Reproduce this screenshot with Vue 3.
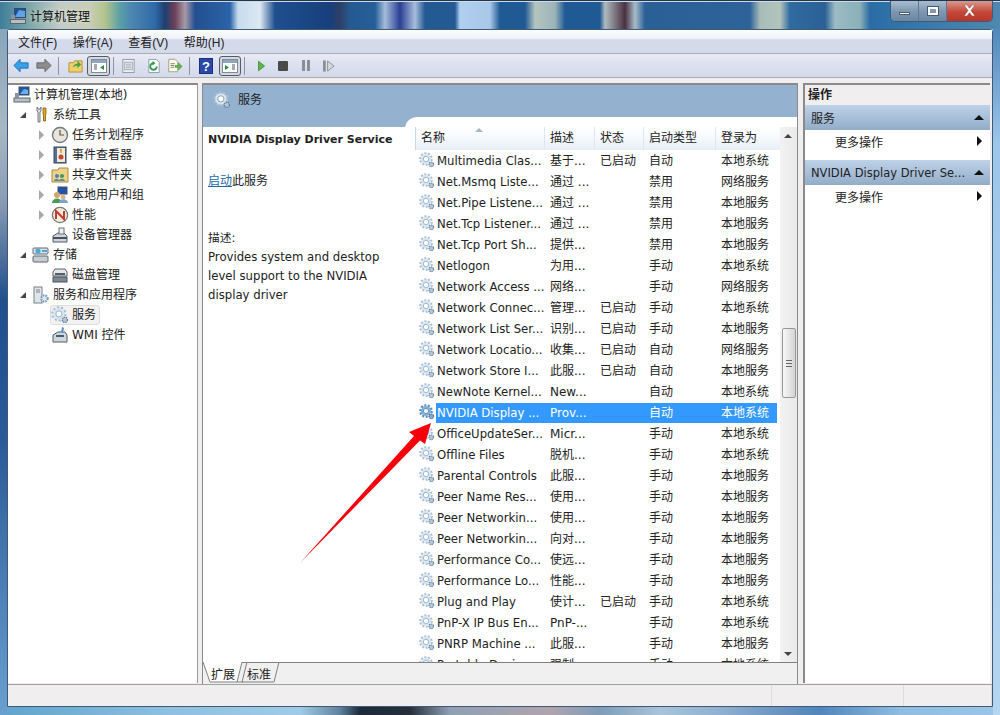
<template>
  <div class="desktop">
    <svg class="defs" width="0" height="0">
      <defs>
        <symbol id="gear" viewBox="0 0 16 16">
          <circle cx="7" cy="7" r="5.700" fill="none" stroke="#a6c0d6" stroke-width="2.200" stroke-dasharray="2 1.500" />
          <circle cx="7" cy="7" r="4" fill="none" stroke="#d8e4ee" stroke-width="2.200" />
          <circle cx="7" cy="7" r="2.700" fill="#fff" stroke="#8aa6be" stroke-width=".8" />
          <circle cx="12.300" cy="12.300" r="2.300" fill="#b8c8d6" stroke="#5f7f9c" stroke-width="1.200" stroke-dasharray="1.200 .7" />
        </symbol>
        <symbol id="gear-on" viewBox="0 0 16 16">
          <circle cx="7" cy="7" r="5.700" fill="none" stroke="#4f88bd" stroke-width="2.200" stroke-dasharray="2 1.500" />
          <circle cx="7" cy="7" r="4" fill="none" stroke="#7fb0da" stroke-width="2.200" />
          <circle cx="7" cy="7" r="2.700" fill="#eaf3fb" stroke="#3f76aa" stroke-width=".8" />
          <circle cx="12.300" cy="12.300" r="2.300" fill="#86acd0" stroke="#37699a" stroke-width="1.200" stroke-dasharray="1.200 .7" />
        </symbol>
      </defs>
    </svg>

    <div class="titlebar">
      <svg class="title-icon" width="18" height="18" viewBox="0 0 18 18">
        <rect x="5.500" y="1.500" width="11" height="9" fill="#1d4fa8" stroke="#3c4a5c" />
        <path d="M6 10l4-7 6 1v6z" fill="#5fa3e6" />
        <rect x="1.500" y="12.500" width="15" height="4" fill="#b8bec4" stroke="#5b6670" />
        <rect x="2" y="8" width="4" height="4" fill="#8a949e" />
      </svg>
      <span class="title-text">计算机管理</span>
      <div class="caption-buttons">
        <div class="cap cap-min"><i></i></div>
        <div class="cap cap-max"><i></i></div>
        <div class="cap cap-close">
          <svg width="13" height="11" viewBox="0 0 13 11"><path d="M1 0h3l2.500 3.300L9 0h3L8 5.500l4 5.500H9L6.500 7.700 4 11H1l4-5.500z" fill="#fff" stroke="#7a3a34" stroke-width=".5" /></svg>
        </div>
      </div>
    </div>

    <div class="frame">
      <div class="menubar">
        <span v-for="m in menus" :key="m">{{ m }}</span>
      </div>

      <div class="toolbar">
        <svg class="tb" width="16" height="15" viewBox="0 0 18 16"><path d="M1 8l7-7v4h9v6H8v4z" fill="#3aa0e8" stroke="#1f6fb0" /></svg>
        <svg class="tb t-fwd" width="16" height="15" viewBox="0 0 18 16"><path d="M17 8l-7-7v4H1v6h9v4z" fill="#8d8d8d" stroke="#666" /></svg>
        <b class="sep s-a"></b>
        <svg class="tb t-up" width="15" height="15" viewBox="0 0 16 16"><path d="M1 5h5l1-2h8v12H1z" fill="#f0cf6c" stroke="#b8922e" /><path d="M5 10c1-3 3-4 5-4V3l4 4-4 4V8c-2 0-3 1-5 2z" fill="#3fa23f" /></svg>
        <span class="toggle t-tree">
          <svg width="16" height="14" viewBox="0 0 16 14"><rect x=".5" y=".5" width="15" height="13" fill="#fff" stroke="#7f8a96" /><rect x="1" y="1" width="14" height="3" fill="#8ea6c0" /><path d="M3 6h3M3 8h3M3 10h3" stroke="#556" /><path d="M13 6v5l-4-2.500z" fill="#2d8a45" /></svg>
        </span>
        <b class="sep s-b"></b>
        <svg class="tb t-doc" width="15" height="16" viewBox="0 0 16 16"><rect x="2" y="1" width="12" height="14" fill="#eef1f4" stroke="#8d98a4" /><rect x="4" y="4" width="8" height="8" fill="#fff" stroke="#9aa5b0" /><path d="M5 6h6M5 8h6M5 10h6" stroke="#8d98a4" /></svg>
        <svg class="tb t-refresh" width="15" height="16" viewBox="0 0 16 16"><path d="M3 1h8l3 3v11H3z" fill="#fff" stroke="#8d98a4" /><path d="M8 5a3.500 3.500 0 1 0 3.500 3.500" fill="none" stroke="#2f9a4a" stroke-width="2" /><path d="M7 2.500l3 2.500-3 2.500z" fill="#2f9a4a" /></svg>
        <svg class="tb t-export" width="16" height="15" viewBox="0 0 18 16"><path d="M2 1h7l3 3v11H2z" fill="#fffde8" stroke="#9a9a80" /><path d="M4 6h5M4 8h4M4 10h4" stroke="#777" /><path d="M9 8h4V5l4 4-4 4v-3H9z" fill="#62b84a" stroke="#3c8a2c" stroke-width=".6" /></svg>
        <b class="sep s-c"></b>
        <svg class="tb t-help" width="14" height="16" viewBox="0 0 14 16"><rect x=".5" y=".5" width="13" height="15" fill="#2a48a8" stroke="#1c2f78" /><text x="7" y="13" text-anchor="middle" font-size="13" font-weight="700" font-family="Liberation Sans, sans-serif" fill="#fff">?</text></svg>
        <span class="toggle t-act">
          <svg width="16" height="14" viewBox="0 0 16 14"><rect x=".5" y=".5" width="15" height="13" fill="#fff" stroke="#7f8a96" /><rect x="1" y="1" width="14" height="3" fill="#8ea6c0" /><path d="M10 6h3M10 8h3M10 10h3" stroke="#556" /><path d="M3 6v5l4-2.500z" fill="#2d8a45" /></svg>
        </span>
        <b class="sep s-b"></b>
        <svg class="tb t-play" width="7" height="12" viewBox="0 0 8 12"><path d="M.5.5l7 5.500-7 5.500z" fill="#5cb84a" stroke="#3f8f32" /></svg>
        <span class="stop"></span>
        <span class="pause"><i></i><i></i></span>
        <svg class="tb t-step" width="12" height="12" viewBox="0 0 13 12"><rect x="0" y="0" width="3" height="12" fill="#8a8f95" /><path d="M5 .5l7 5.500-7 5.500z" fill="#d5d8dc" stroke="#8a8f95" /></svg>
      </div>

      <div class="panes">
        <aside class="tree">
          <div v-for="n in tree" :key="n.label" class="node" :class="'lvl' + n.level">
            <span class="twisty" :class="n.twisty"></span>
            <span class="node-icon"><svg width="18" height="18" viewBox="0 0 18 18" v-html="icons[n.icon]"></svg></span>
            <span class="node-label" :class="{ picked: n.picked }">{{ n.label }}</span>
          </div>
        </aside>

        <main class="center">
          <div class="center-head">
            <svg class="head-gear" width="18" height="18"><use href="#gear" /></svg>
            <span>服务</span>
          </div>
          <div class="center-body">
            <div class="detail">
              <h3>NVIDIA Display Driver Service</h3>
              <p class="start"><a>启动</a>此服务</p>
              <p class="desc">描述:<br />Provides system and desktop<br />level support to the NVIDIA<br />display driver</p>
            </div>
            <div class="list-wrap">
              <div class="list">
                <div class="list-head">
                  <span class="col c1">名称<em class="sort"></em></span>
                  <span class="col c2">描述</span>
                  <span class="col c3">状态</span>
                  <span class="col c4">启动类型</span>
                  <span class="col c5">登录为</span>
                </div>
                <div v-for="r in services" :key="r[0] + r[1]" class="row" :class="{ selected: r[0].startsWith('NVIDIA') }">
                  <svg class="row-gear" width="16" height="16"><use :href="r[0].startsWith('NVIDIA') ? '#gear-on' : '#gear'" /></svg>
                  <div class="cells">
                    <span class="cell c1">{{ r[0] }}</span>
                    <span class="cell c2">{{ r[1] }}</span>
                    <span class="cell c3">{{ r[2] }}</span>
                    <span class="cell c4">{{ r[3] }}</span>
                    <span class="cell c5">{{ r[4] }}</span>
                  </div>
                </div>
              </div>
              <div class="scrollbar">
                <span class="arrow-up"></span>
                <span class="thumb"><i></i></span>
                <span class="arrow-down"></span>
              </div>
            </div>
          </div>
          <div class="tabs">
            <svg class="tab-lines" width="90" height="22" viewBox="0 0 90 22">
              <path d="M0 0L7 20H34L39 0z" fill="#fff" />
              <path d="M0 0L7 20H34L39 0M34 20H40M39 20L44 0H76L71 20H39" fill="none" stroke="#808080" />
            </svg>
            <span class="tab">扩展</span>
            <span class="tab">标准</span>
          </div>
        </main>

        <aside class="actions">
          <div class="actions-title">操作</div>
          <div class="group-head"><span>服务</span><i class="tri-up"></i></div>
          <div class="group-item"><span>更多操作</span><i class="tri-right"></i></div>
          <div class="group-head"><span class="latin">NVIDIA Display Driver Se...</span><i class="tri-up"></i></div>
          <div class="group-item"><span>更多操作</span><i class="tri-right"></i></div>
        </aside>
      </div>

      <div class="statusbar">
        <span class="s1"></span>
        <span class="s2"></span>
        <span class="s3"></span>
      </div>
    </div>

    <svg class="red-arrow" width="1000" height="715" viewBox="0 0 1000 715">
      <path d="M300 563L414 436 409 432 431 423 425 444 420 440.500z" fill="#f5000a" />
    </svg>
  </div>
</template>

<script setup>
const menus = ['文件(F)', '操作(A)', '查看(V)', '帮助(H)']

const icons = {
  computer:
    '<rect x="6" y="1" width="10" height="8" fill="#1f55ac" stroke="#44505e"/><path d="M7 8l4-5 4 1v4z" fill="#6cb0ea"/><rect x="1" y="12" width="16" height="4" fill="#b9bfc5" stroke="#5b6670"/><rect x="2" y="7" width="4" height="5" fill="#8a949e"/>',
  tools:
    '<path d="M5 1v4l1 1v10h2V6l1-1V1L8 3H6z" fill="#d8dde2" stroke="#59636d" stroke-width=".8"/><path d="M11 2h3v6l-.5 1v6h-2V9L11 8z" fill="#e4a91c" stroke="#7c5d12" stroke-width=".8"/>',
  clock:
    '<circle cx="9" cy="9" r="7.500" fill="#e9e6d8" stroke="#707a84" stroke-width="1.400"/><path d="M9 4v5h4" fill="none" stroke="#555" stroke-width="1.200"/>',
  event:
    '<rect x="3" y="1" width="12" height="16" fill="#54709c" stroke="#38465c"/><rect x="6" y="2" width="8" height="14" fill="#f2ead2"/><circle cx="10" cy="11" r="2.500" fill="#c9423a"/><path d="M9 3h2l-.5 4h-1z" fill="#d09a1c"/>',
  share:
    '<path d="M1 4h6l1-2h9v14H1z" fill="#ecd388" stroke="#a88b3c"/><circle cx="6" cy="10" r="2" fill="#4f7fc0"/><circle cx="11" cy="10" r="2" fill="#3e9a52"/><path d="M3 15c0-3 5-3 5 0zM8 15c0-3 6-3 6 0z" fill="#5e8aa8"/>',
  users:
    '<rect x="7" y="1" width="9" height="7" fill="#1f55ac" stroke="#44505e"/><circle cx="6" cy="9" r="3" fill="#d4a46c"/><path d="M1 17c0-6 10-6 10 0z" fill="#4d9a54"/><circle cx="12" cy="11" r="2.500" fill="#d9b48a"/><path d="M8 17c0-5 9-5 9 0z" fill="#7ea6cc"/>',
  perf:
    '<circle cx="9" cy="9" r="7.600" fill="#f2ecdc" stroke="#7a7a72" stroke-width="1.300"/><path d="M5 13V5l8 8V5" fill="none" stroke="#c23a30" stroke-width="2"/>',
  device:
    '<path d="M2 10l5-3h6l3 3v6H2z" fill="#cfd4d9" stroke="#525c66"/><rect x="8" y="2" width="5" height="6" fill="#eef0f2" stroke="#6b747d"/><rect x="2" y="11" width="14" height="2" fill="#4a5460"/>',
  storage:
    '<rect x="1" y="2" width="15" height="6" rx="1" fill="#dfe3e7" stroke="#5c6670"/><rect x="1" y="10" width="15" height="6" rx="1" fill="#c6ccd2" stroke="#5c6670"/><circle cx="6" cy="5" r="2.600" fill="#4ea7d8"/><rect x="10" y="4" width="5" height="2" fill="#4ea7d8"/>',
  disk:
    '<path d="M2 6l2-3h10l2 3v4H2z" fill="#e5e7e9" stroke="#59636d"/><rect x="2" y="11" width="14" height="5" fill="#7f8890" stroke="#4f5962"/><rect x="4" y="7" width="10" height="2" fill="#555f69"/>',
  apps:
    '<rect x="2" y="1" width="8" height="16" fill="#e1e5ea" stroke="#76808a"/><path d="M4 4h4M4 6h4" stroke="#76808a"/><circle cx="12.500" cy="12.500" r="3.200" fill="#dfe8f0" stroke="#6f98ba" stroke-width="2" stroke-dasharray="1.600 1"/>',
  service: '<use href="#gear" x="0" y="0" width="18" height="18"/>',
  wmi:
    '<path d="M2 9l5-3h7l2 3v7H2z" fill="#cfd6dc" stroke="#525c66"/><path d="M5 9h8v2H5z" fill="#3f5f7f"/><path d="M11 1l2 1-1 5-2-1z" fill="#5b96c9"/>',
}

const tree = [
  { label: '计算机管理(本地)', level: 0, icon: 'computer' },
  { label: '系统工具', level: 1, icon: 'tools', twisty: 'open' },
  { label: '任务计划程序', level: 2, icon: 'clock', twisty: 'closed' },
  { label: '事件查看器', level: 2, icon: 'event', twisty: 'closed' },
  { label: '共享文件夹', level: 2, icon: 'share', twisty: 'closed' },
  { label: '本地用户和组', level: 2, icon: 'users', twisty: 'closed' },
  { label: '性能', level: 2, icon: 'perf', twisty: 'closed' },
  { label: '设备管理器', level: 2, icon: 'device' },
  { label: '存储', level: 1, icon: 'storage', twisty: 'open' },
  { label: '磁盘管理', level: 2, icon: 'disk' },
  { label: '服务和应用程序', level: 1, icon: 'apps', twisty: 'open' },
  { label: '服务', level: 2, icon: 'service', picked: true },
  { label: 'WMI 控件', level: 2, icon: 'wmi' },
]

const services = [
  ['Multimedia Clas...', '基于...', '已启动', '自动', '本地系统'],
  ['Net.Msmq Liste...', '通过 ...', '', '禁用', '网络服务'],
  ['Net.Pipe Listene...', '通过 ...', '', '禁用', '本地服务'],
  ['Net.Tcp Listener...', '通过 ...', '', '禁用', '本地服务'],
  ['Net.Tcp Port Sh...', '提供...', '', '禁用', '本地服务'],
  ['Netlogon', '为用...', '', '手动', '本地系统'],
  ['Network Access ...', '网络...', '', '手动', '网络服务'],
  ['Network Connec...', '管理...', '已启动', '手动', '本地系统'],
  ['Network List Ser...', '识别...', '已启动', '手动', '本地服务'],
  ['Network Locatio...', '收集...', '已启动', '自动', '网络服务'],
  ['Network Store I...', '此服...', '已启动', '自动', '本地服务'],
  ['NewNote Kernel...', 'New...', '', '自动', '本地系统'],
  ['NVIDIA Display ...', 'Prov...', '', '自动', '本地系统'],
  ['OfficeUpdateSer...', 'Micr...', '', '手动', '本地系统'],
  ['Offline Files', '脱机...', '', '手动', '本地系统'],
  ['Parental Controls', '此服...', '', '手动', '本地服务'],
  ['Peer Name Res...', '使用...', '', '手动', '本地服务'],
  ['Peer Networkin...', '使用...', '', '手动', '本地服务'],
  ['Peer Networkin...', '向对...', '', '手动', '本地服务'],
  ['Performance Co...', '使远...', '', '手动', '本地服务'],
  ['Performance Lo...', '性能...', '', '手动', '本地服务'],
  ['Plug and Play', '使计...', '已启动', '手动', '本地系统'],
  ['PnP-X IP Bus En...', 'PnP-...', '', '手动', '本地系统'],
  ['PNRP Machine ...', '此服...', '', '手动', '本地服务'],
  ['Portable Device', '强制...', '', '手动', '本地系统'],
]
</script>

<style>
html, body { margin: 0; overflow: hidden; }
</style>

<style scoped>
.desktop {
  position: relative;
  width: 1000px;
  height: 715px;
  overflow: hidden;
  display: flex;
  flex-direction: column;
  font-family: "DejaVu Sans", "Noto Sans CJK SC", sans-serif;
  font-size: 12px;
  color: #222;
  background:
    linear-gradient(180deg, #7fa0b8 0, #a8b8c4 18%, #8a9cb4 28%, #1f4f8c 42%, #2a5a98 62%, #6aa0d0 100%) 0 0 / 7px 100% no-repeat,
    linear-gradient(180deg, #3f78b0 0, #9cc6ea 20%, #b4d6f0 100%) 993px 0 / 7px 100% no-repeat,
    linear-gradient(90deg, #5fa4cc 0, #8fc0e0 17%, #a0cbe6 30%, #60829e 34%, #1d2a3a 36%, #26303c 41%, #8fa0b4 45%, #b0a4ac 55%, #7f9cb8 60%, #a8c4d8 66%, #8fb0d0 72%, #6a93c0 78%, #4f86bc 82%, #8fbce0 90%, #9cc6e6 100%);
}
.defs { position: absolute; }
.titlebar {
  height: 29px;
  flex: none;
  display: flex;
  align-items: center;
  padding-left: 9px;
  box-sizing: border-box;
  border-top: 1px solid #21364e;
  box-shadow: inset 0 1px 0 #cfdbe6;
  background: linear-gradient(90deg, #3e7d9a 0, #7ea8a8 3%, #c3ccc4 6%, #c8cdb4 9%, #b4c48c 10.500%, #5aa0a8 12%, #4f88b0 13%, #2e6aa8 15.500%, #1f3f70 16.500%, #6e4058 17.500%, #a89aa8 18.500%, #234f90 19.500%, #2a64a8 23%, #c6dcee 23.800%, #dde8f2 26%, #1f4f8e 27.500%, #173f7c 33%, #2e3f66 34%, #245a92 35%, #255e98 37.500%, #a5bddb 38.500%, #2a3f94 40%, #a8bedc 41.500%, #235a94 42.500%, #235a94 45.500%, #b0cff0 46%, #a8c8e8 49%, #1f5a94 50%, #1f5a94 52.500%, #b4c4c0 53.500%, #9cb4b8 55.500%, #1f5a94 56.500%, #1f5a94 60%, #b0bcc0 60.500%, #4a3040 62.500%, #a8bcc8 63.500%, #2a6096 64.500%, #2e639a 75%, #a8bcb8 76%, #b4c4bc 78%, #2e6ca0 79%, #2a6096 82.500%, #9cbcc4 83.500%, #8ab0b8 86%, #2a6ca4 87%, #2f72a8 89%, #4f88b0 100%);
}
.title-text { margin-left: 3px; color: #111; text-shadow: 0 0 5px rgba(255, 255, 255, .7); }
.title-icon { margin-top: 1px; }
.caption-buttons {
  margin-left: auto;
  margin-right: 7px;
  margin-top: -8px;
  display: flex;
  height: 20px;
  border: 1px solid #3d5a78;
  border-top: 0;
  border-radius: 0 0 5px 5px;
  overflow: hidden;
}
.cap { display: flex; align-items: center; justify-content: center; }
.cap-min, .cap-max {
  width: 27px;
  border-right: 1px solid #5c7896;
  background: linear-gradient(180deg, #a9bdd0, #7f99b2 50%, #6b86a2);
}
.cap-min i { width: 11px; height: 3px; margin-top: 5px; background: #fff; border: 1px solid #4a5a6a; box-sizing: border-box; }
.cap-max i { width: 10px; height: 8px; border: 2px solid #fff; outline: 1px solid #4a5a6a; box-sizing: border-box; }
.cap-close {
  width: 45px;
  background: linear-gradient(180deg, #d99a8e, #c4483a 55%, #b8362a);
}
.frame {
  flex: 1;
  margin: 0 7px 8px 7px;
  min-height: 0;
  display: flex;
  flex-direction: column;
  background: #f0eeee;
  border: 1px solid #3f5a78;
  border-radius: 3px 3px 0 0;
  box-sizing: border-box;
}
.menubar {
  height: 24px;
  flex: none;
  display: flex;
  align-items: center;
  gap: 15.500px;
  padding-left: 10px;
  box-sizing: border-box;
  font-family: "Liberation Sans", "Noto Sans CJK SC", sans-serif;
  background: linear-gradient(180deg, #fbfcfe 0, #eef1f8 38%, #d5daeb 42%, #d5daeb 100%);
  border-bottom: 1px solid #a9aeb5;
}
.toolbar {
  height: 23px;
  flex: none;
  display: flex;
  align-items: center;
  padding-left: 5px;
  background: linear-gradient(180deg, #e9ecf6 0, #dde1f0 40%, #d5daeb 100%);
  border-bottom: 1px solid #a9aeb5;
}
.tb { display: block; flex: none; }
.t-fwd { margin-left: 7px; }
.sep { width: 1px; height: 18px; background: #8e96a2; flex: none; }
.s-a, .s-c { margin-left: 6px; }
.s-b { margin-left: 3px; }
.t-up { margin-left: 9px; }
.toggle {
  height: 20px;
  border: 1px solid #555c66;
  border-radius: 3px;
  background: #d4d8e0;
  display: flex;
  align-items: center;
  justify-content: center;
  box-sizing: border-box;
  flex: none;
}
.t-tree { width: 23px; margin-left: 4px; }
.t-doc { margin-left: 7px; }
.t-refresh { margin-left: 10px; }
.t-export { margin-left: 6px; }
.t-help { margin-left: 9px; }
.t-act { width: 22px; margin-left: 6px; }
.t-play { margin-left: 13px; }
.stop { width: 10px; height: 10px; background: #4a4a4a; margin-left: 13px; border-radius: 1px; flex: none; }
.pause { display: flex; gap: 2px; margin-left: 14px; flex: none; }
.pause i { width: 3px; height: 11px; background: #8a8f95; }
.t-step { margin-left: 13px; }
.panes {
  flex: 1;
  min-height: 0;
  display: flex;
  padding: 5px 2px 0 0;
  background: #f0eeee;
}
.tree {
  width: 190px;
  flex: none;
  background: #fff;
  border-top: 2px solid #8a8a8a;
  border-right: 1px solid #999;
  box-sizing: border-box;
  margin-bottom: 1px;
}
.node { height: 20px; display: flex; align-items: center; }
.lvl0 { padding-left: 4px; }
.lvl1 { padding-left: 11px; }
.lvl2 { padding-left: 30px; }
.lvl0 .twisty { display: none; }
.twisty { width: 12px; flex: none; height: 10px; position: relative; }
.twisty.open::before {
  content: "";
  position: absolute;
  left: 1px;
  top: 2px;
  border-left: 6px solid transparent;
  border-bottom: 6px solid #444;
}
.twisty.closed::before {
  content: "";
  position: absolute;
  left: 1px;
  top: 0;
  border-top: 5px solid transparent;
  border-bottom: 5px solid transparent;
  border-left: 5px solid #a8a8a8;
}
.node-icon { width: 18px; height: 18px; flex: none; margin: 0 1px 0 1px; position: relative; z-index: 1; }
.node-icon svg { display: block; }
.node-label { padding: 0 2px; line-height: 18px; }
.picked { background: #f2f2f2; border: 1px solid #dcdcdc; border-radius: 3px; margin-left: -20px; padding: 0 3px 0 21px; }
.center {
  flex: 1;
  min-width: 0;
  margin-left: 4px;
  display: flex;
  flex-direction: column;
  background: #fff;
  border: 1px solid #8a8a8a;
  border-top-width: 2px;
  border-bottom: 0;
  min-height: 0;
}
.center-head {
  height: 42px;
  flex: none;
  background: #95b1d0;
  display: flex;
  align-items: flex-start;
  padding: 6px 0 0 10px;
  box-sizing: border-box;
  gap: 7px;
  line-height: 18px;
}
.head-gear { flex: none; }
.center-body { flex: 1; min-height: 0; display: flex; position: relative; }
.detail { width: 202px; flex: none; padding: 5px 5px; box-sizing: border-box; }
.detail h3 { margin: 0; font-size: 11px; font-weight: 700; line-height: 16px; white-space: nowrap; }
.detail p { margin: 0; line-height: 19px; }
.start { padding-top: 24px; }
.start a { color: #1a6aa8; text-decoration: underline; }
.desc { padding-top: 38px; font-size: 11.700px; }
.list-wrap { flex: 1; min-width: 0; display: flex; position: relative; margin-top: -10px; background: #fff; border-radius: 12px 0 0 0; overflow: hidden; padding: 10px 0 0 10px; }
.list { flex: 1; min-width: 0; overflow: hidden; }
.list-head {
  height: 23px;
  display: flex;
  align-items: center;
  background: linear-gradient(180deg, #fff, #f4f8fc 55%, #e6eef6);
  box-shadow: inset 1px 0 0 #c8d8e8;
}
.col { box-sizing: border-box; padding-left: 6px; line-height: 23px; border-right: 1px solid #dfe6ee; position: relative; flex: none; }
.sort {
  position: absolute;
  left: 60px;
  top: 1px;
  border-left: 4px solid transparent;
  border-right: 4px solid transparent;
  border-bottom: 4px solid #a9b8c6;
}
.c1 { width: 130px; }
.c2 { width: 50px; }
.c3 { width: 49px; }
.c4 { width: 72px; }
.c5 { width: 63px; border-right: 0; }
.col.c2, .col.c3, .col.c4, .col.c5 { padding-left: 5px; }
.row { height: 21px; display: flex; align-items: center; position: relative; }
.row-gear { position: absolute; left: 4px; top: 2px; }
.cells { display: flex; height: 20px; align-items: center; width: 100%; }
.cell { box-sizing: border-box; padding-left: 5px; white-space: nowrap; flex: none; line-height: 20px; }
.cell.c1 { padding-left: 22px; font-size: 11.700px; }
.row.selected .cells { margin-left: 21px; width: auto; background: #3399ff; color: #fff; }
.row.selected .cell.c1 { width: 109px; padding-left: 1px; }
.row.selected .cell.c5 { width: 61px; }
.scrollbar { width: 17px; flex: none; background: linear-gradient(90deg, #f2f2f2, #eaeaea); position: relative; box-sizing: border-box; }
.arrow-up { position: absolute; left: 4px; top: 7px; border-left: 4px solid transparent; border-right: 4px solid transparent; border-bottom: 4px solid #444; }
.arrow-down { position: absolute; left: 4px; bottom: 6px; border-left: 4px solid transparent; border-right: 4px solid transparent; border-top: 4px solid #444; }
.thumb { position: absolute; left: 2px; right: 1px; top: 201px; height: 70px; background: linear-gradient(90deg, #f8f8f8, #d4d4d4); border: 1px solid #979797; border-radius: 2px; box-sizing: border-box; display: flex; align-items: center; justify-content: center; }
.thumb i { width: 6px; height: 7px; background: repeating-linear-gradient(180deg, #666 0 1px, transparent 1px 3px); }
.tabs {
  height: 22px;
  flex: none;
  display: flex;
  padding-left: 8px;
  gap: 12px;
  background: #f0f0f0;
  box-shadow: inset 0 1px 0 #808080;
  box-sizing: border-box;
  position: relative;
}
.tab-lines { position: absolute; left: 0; top: 0; }
.tab { line-height: 27px; position: relative; }
.actions {
  width: 187px;
  flex: none;
  margin-left: 5px;
  background: #fff;
  border-top: 2px solid #8a8a8a;
  border-left: 2px solid #8a8a8a;
  box-sizing: border-box;
  margin-bottom: 1px;
}
.actions-title { height: 20px; line-height: 21px; padding-left: 3px; background: #f0eeee; font-weight: 700; box-sizing: border-box; }
.group-head {
  height: 25px;
  display: flex;
  align-items: center;
  justify-content: space-between;
  padding: 0 6px 0 6px;
  background: linear-gradient(180deg, #bed2e8, #92acc8);
}
.latin { font-size: 11.500px; }
.group-item { height: 30px; padding: 0 8px 8px 30px; box-sizing: border-box; display: flex; align-items: center; justify-content: space-between; }
.tri-up { border-left: 5px solid transparent; border-right: 5px solid transparent; border-bottom: 5px solid #111; }
.tri-right { border-top: 5px solid transparent; border-bottom: 5px solid transparent; border-left: 5px solid #111; }
.statusbar { height: 22px; flex: none; display: flex; border-top: 1px solid #a0a0a0; background: #f0eeee; box-sizing: border-box; }
.statusbar span { border-right: 1px solid #ddd; height: 100%; box-sizing: border-box; }
.s1 { width: 764px; }
.s2 { width: 132px; }
.s3 { flex: 1; }
.red-arrow { position: absolute; left: 0; top: 0; pointer-events: none; }
</style>
